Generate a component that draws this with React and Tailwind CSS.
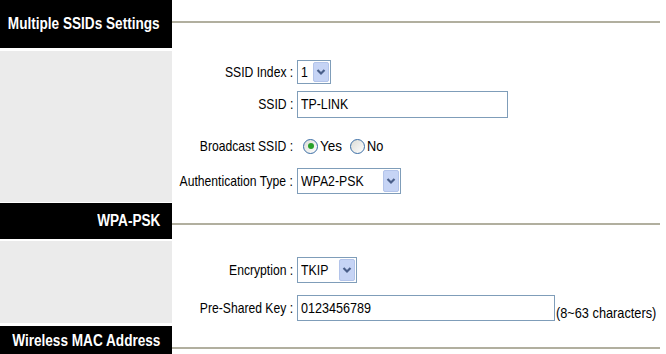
import React from 'react';

// the screenshot uses a narrow face; squeeze Liberation Sans to match
function Narrow({ children, right, squeeze = 'scale-x-[0.81]' }) {
    return (
        <span className={`inline-block whitespace-nowrap ${squeeze} ${right ? 'origin-right' : 'origin-left'}`}>
            {children}
        </span>
    );
}

function Chevron() {
    return (
        <svg width="10" height="8" viewBox="0 0 10 8">
            <polyline points="1.5,2 5,5.5 8.5,2" fill="none" stroke="#4a5f8a" strokeWidth="2.2" />
        </svg>
    );
}

function Select({ box, value }) {
    return (
        <div className={`flex items-stretch shrink-0 border border-[#7f9db9] bg-white ${box}`}>
            <span className="flex-1 flex items-center pl-[3px] overflow-hidden"><Narrow squeeze="scale-x-[0.82]">{value}</Narrow></span>
            <span className="m-[1px] w-[16px] flex items-center justify-center bg-[#c6d4f5] border border-[#b3c4ea] rounded-[2px]">
                <Chevron />
            </span>
        </div>
    );
}

function Radio({ checked }) {
    return (
        <span className="w-[15px] h-[15px] shrink-0 rounded-full border border-[#3b6ea5] bg-gradient-to-br from-[#dcdcd6] to-white flex items-center justify-center">
            {checked && <span className="w-[6px] h-[6px] rounded-full bg-[#2aa12a]" />}
        </span>
    );
}

function Row({ label, top, children }) {
    return (
        <div className={`flex items-center ${top}`}>
            <div className="w-[122px] shrink-0 flex justify-end pr-[1px]"><Narrow right>{label}</Narrow></div>
            <div className="pl-[3px] flex items-center shrink-0">{children}</div>
        </div>
    );
}

function Header({ title, height, linePad }) {
    return (
        <div className={`flex ${height}`}>
            <div className="w-[172px] shrink-0 bg-black text-white font-bold text-[16px] flex items-center justify-end pr-[12px]">
                <Narrow right squeeze="scale-x-[0.85]">{title}</Narrow>
            </div>
            <div className={`flex-1 pr-[6px] ${linePad}`}>
                <div className="h-[2px] bg-[#b1af9f]" />
            </div>
        </div>
    );
}

export default function App() {
    return (
        <div className="w-[666px] h-[354px] overflow-hidden bg-white text-black text-[15px] font-['Liberation_Sans',Arial,sans-serif]">
            <Header title="Multiple SSIDs Settings" height="h-[48px]" linePad="pt-[21px]" />

            <div className="flex mt-[3px] h-[151px]">
                <div className="w-[172px] shrink-0 bg-[#ebebeb]" />
                <div className="flex-1 min-w-0">
                    <Row label="SSID Index :" top="mt-[9px] h-[24px]">
                        <Select box="w-[34px] h-[24px]" value="1" />
                    </Row>
                    <Row label="SSID :" top="mt-[7px] h-[27px]">
                        <div className="w-[211px] h-[27px] border border-[#7f9db9] flex items-center pl-[3px]">
                            <Narrow squeeze="scale-x-[0.82]">TP-LINK</Narrow>
                        </div>
                    </Row>
                    <Row label="Broadcast SSID :" top="mt-[18px] h-[20px]">
                        <div className="flex items-center pl-[6px]">
                            <Radio checked />
                            <span className="w-[32px] pl-[2px]"><Narrow squeeze="scale-x-[0.9]">Yes</Narrow></span>
                            <Radio />
                            <span className="w-[20px] pl-[2px]"><Narrow squeeze="scale-x-[0.85]">No</Narrow></span>
                        </div>
                    </Row>
                    <Row label="Authentication Type :" top="mt-[12px] h-[26px]">
                        <Select box="w-[104px] h-[26px]" value="WPA2-PSK" />
                    </Row>
                </div>
            </div>

            <div className="mt-[1px]">
                <Header title="WPA-PSK" height="h-[36px]" linePad="pt-[20px]" />
            </div>

            <div className="flex mt-[2px] h-[82px]">
                <div className="w-[172px] shrink-0 bg-[#ebebeb]" />
                <div className="flex-1 min-w-0">
                    <Row label="Encryption :" top="mt-[16px] h-[26px]">
                        <Select box="w-[60px] h-[26px]" value="TKIP" />
                    </Row>
                    <Row label="Pre-Shared Key :" top="mt-[12px] h-[26px]">
                        <div className="w-[258px] shrink-0 h-[26px] border border-[#7f9db9] flex items-center pl-[3px]">
                            <Narrow squeeze="scale-x-[0.84]">0123456789</Narrow>
                        </div>
                        <span className="self-end leading-none mb-[1px] pl-[1px]">
                            <Narrow squeeze="scale-x-[0.85]">(8~63 characters)</Narrow>
                        </span>
                    </Row>
                </div>
            </div>

            <div className="mt-[3px]">
                <Header title="Wireless MAC Address" height="h-[30px]" linePad="pt-[21px]" />
            </div>
        </div>
    );
}
